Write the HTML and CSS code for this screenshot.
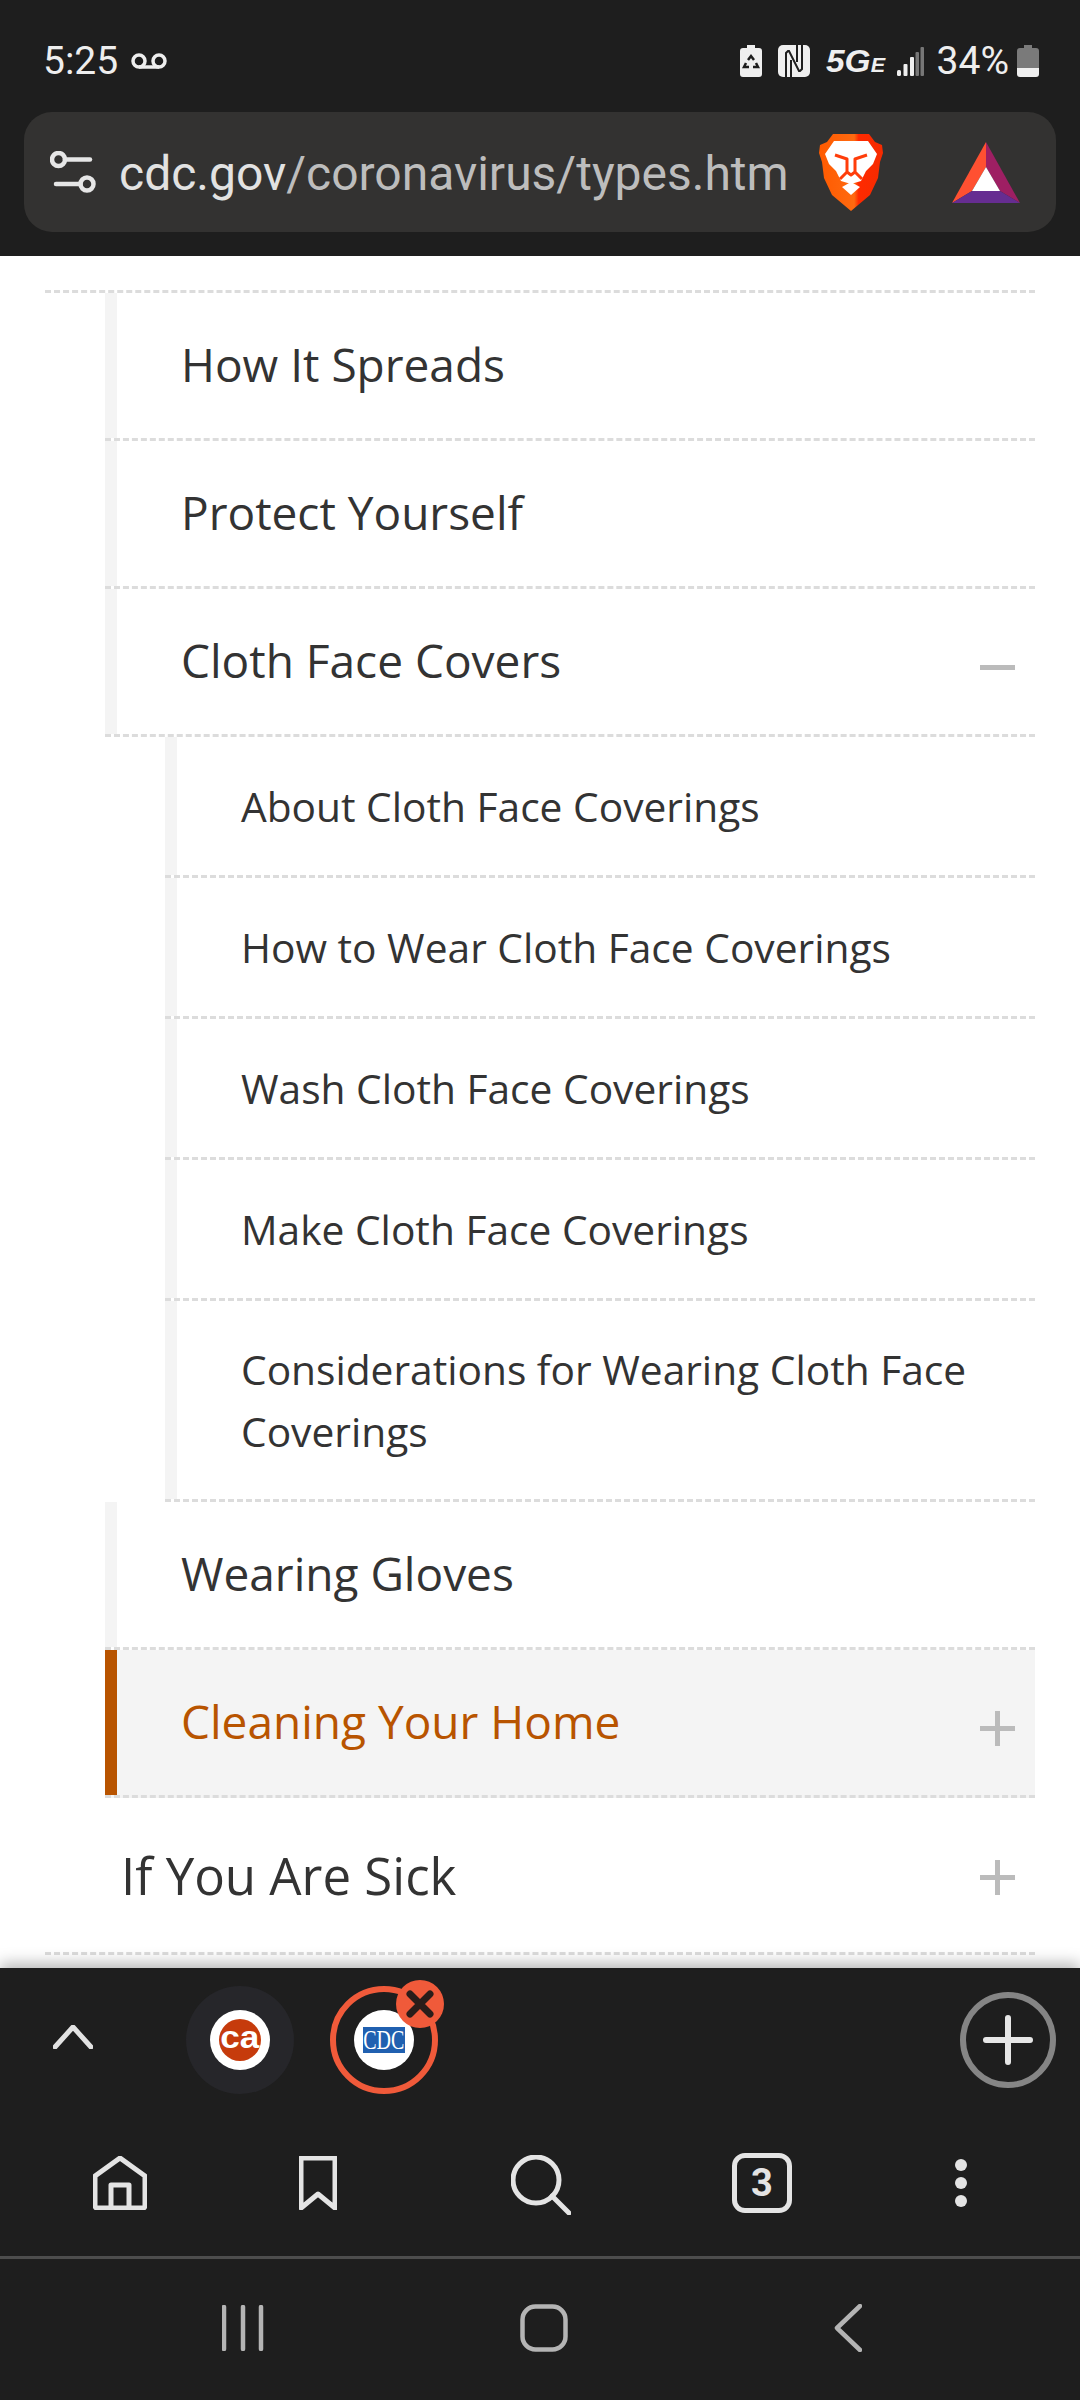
FILE: index.html
```html
<!DOCTYPE html>
<html lang="en">
<head>
<meta charset="utf-8">
<title>Cleaning Your Home</title>
<link rel="stylesheet" href="styles.css">
</head>
<body>
<div class="screen">
  <header class="top">
    <div class="status">
      <div class="status-left">
        <span class="clock">5:25</span>
        <svg class="vm" viewBox="0 0 36 16"><circle cx="8" cy="8" r="6" /><circle cx="28" cy="8" r="6" /><path d="M8 14H28" /></svg>
      </div>
      <div class="status-right">
        <svg class="ic-saver" viewBox="0 0 22 32"><path class="fill" d="M7 0h8v3h4a3 3 0 0 1 3 3v23a3 3 0 0 1-3 3H3a3 3 0 0 1-3-3V6a3 3 0 0 1 3-3h4z"/><path class="recycle" d="M8 15l3-4 3 4M16 18l2 4h-5M6 18l-2 4h5"/></svg>
        <svg class="ic-nfc" viewBox="0 0 32 32"><rect class="fill" width="32" height="32" rx="5"/><path class="nfc" d="M8 32V8l2-2h1l10 20h1l2-2V0M13 15v17M19 0v17"/></svg>
        <span class="net"><span class="net-in">5G<span class="net-e">E</span></span></span>
        <svg class="ic-signal" viewBox="0 0 27 29"><rect class="on" x="0" y="23" width="4" height="6" rx="1.5"/><rect class="on" x="6.5" y="17" width="4" height="12" rx="1"/><rect class="on" x="13" y="10" width="4" height="19" rx="1"/><rect class="off" x="18.5" y="5" width="3.5" height="24" rx="1"/><rect class="off" x="23.5" y="0" width="3.5" height="29" rx="1"/></svg>
        <span class="pct">34%</span>
        <svg class="ic-batt" viewBox="0 0 22 32"><path class="empty" d="M7 0h8v3h4a3 3 0 0 1 3 3v17H0V6a3 3 0 0 1 3-3h4z"/><path class="fill" d="M0 23h22v6a3 3 0 0 1-3 3H3a3 3 0 0 1-3-3z"/></svg>
      </div>
    </div>
    <div class="urlbar">
      <svg class="ic-sliders" viewBox="0 0 46 42"><circle cx="8.5" cy="8.5" r="6.5"/><path d="M15 8.5H40"/><circle cx="37" cy="33" r="6.5"/><path d="M6 33H30.500"/></svg>
      <div class="url"><span class="url-host">cdc.gov</span>/coronavirus/types.htm</div>
      <svg class="ic-brave" viewBox="0 0 64 77">
        <defs><linearGradient id="bg" x1="0" x2="1" y1="0" y2="0"><stop offset="0" stop-color="#ff5a00"/><stop offset=".55" stop-color="#ff6a10"/><stop offset=".62" stop-color="#ff2a00"/><stop offset="1" stop-color="#f52b00"/></linearGradient></defs>
        <path fill="url(#bg)" d="M14 0H50L56 8 63 11 64 19 61 28 59 44 51 61 32 77 13 61 5 44 3 28 0 19 1 11 8 8z"/>
        <path fill="#fff" d="M15 7H49L58 20 54 30 47 37 42 47 32 50 22 47 17 37 10 30 6 20z"/>
        <path class="lion" d="M16 21 28 25 28 38 32 41 36 38 36 25 48 21M28 38 21 45M36 38 43 45"/>
        <path fill="#fff" d="M23 53 32 48 41 53 32 61z"/>
      </svg>
      <svg class="ic-bat" viewBox="0 0 68 61">
        <path fill="#ff5031" d="M34 0V25L20 49 0 61z"/>
        <path fill="#9e1f63" d="M34 0 68 61 48 49 34 25z"/>
        <path fill="#662d91" d="M0 61 20 49H48L68 61z"/>
        <path fill="#fff" d="M34 25 48 49H20z"/>
      </svg>
    </div>
  </header>

  <main class="page">
    <ul class="nav">
      <li>
        <ul class="sub">
          <li class="row row-2"><a>How It Spreads</a></li>
          <li class="row row-2"><a>Protect Yourself</a></li>
          <li class="row row-2"><a>Cloth Face Covers</a><svg class="toggle" viewBox="0 0 35 35"><path d="M0 17.500H35"/></svg></li>
          <li>
            <ul class="subsub">
              <li class="row row-3"><a>About Cloth Face Coverings</a></li>
              <li class="row row-3"><a>How to Wear Cloth Face Coverings</a></li>
              <li class="row row-3"><a>Wash Cloth Face Coverings</a></li>
              <li class="row row-3"><a>Make Cloth Face Coverings</a></li>
              <li class="row row-3 row-wrap"><a>Considerations for Wearing Cloth Face Coverings</a></li>
            </ul>
          </li>
          <li class="row row-2"><a>Wearing Gloves</a></li>
          <li class="row row-2 active"><a>Cleaning Your Home</a><svg class="toggle" viewBox="0 0 35 35"><path d="M0 17.500H35M17.500 0V35"/></svg></li>
        </ul>
      </li>
      <li class="row row-1"><a>If You Are Sick</a><svg class="toggle" viewBox="0 0 35 35"><path d="M0 17.500H35M17.500 0V35"/></svg></li>
    </ul>
  </main>

  <footer class="bottom">
    <div class="tabstrip">
      <svg class="ic-chev" viewBox="0 0 40 24"><path d="M2 22 20 2 38 22"/></svg>
      <div class="tab tab-ca">
        <div class="fav"><span class="ca-badge"><span class="ca-text">ca</span></span></div>
      </div>
      <div class="tab tab-cdc">
        <div class="fav"><span class="cdc-badge"><span class="cdc-text">CDC</span></span></div>
        <svg class="close" viewBox="0 0 48 48"><circle cx="24" cy="24" r="24"/><path d="M14 14 34 34M34 14 14 34"/></svg>
      </div>
      <svg class="ic-add" viewBox="0 0 96 96"><circle cx="48" cy="48" r="45"/><path d="M26 48H70M48 26V70"/></svg>
    </div>
    <nav class="tools">
      <svg class="ic-home" viewBox="0 0 54 54"><path d="M2 20 27 2 52 20V50a2 2 0 0 1-2 2H4a2 2 0 0 1-2-2z"/><path d="M18 52V29H36V52"/></svg>
      <svg class="ic-book" viewBox="0 0 38 54"><path d="M2 2H36V52L19 38 2 52z"/></svg>
      <svg class="ic-search" viewBox="0 0 60 60"><circle cx="25" cy="25" r="23"/><path d="M41 41 58 58"/></svg>
      <div class="tabs-count">3</div>
      <div class="dots"><i></i><i></i><i></i></div>
    </nav>
    <div class="sysnav">
      <svg class="ic-recents" viewBox="0 0 42 46"><path d="M2 2V44M21 2V44M39 2V44"/></svg>
      <svg class="ic-square" viewBox="0 0 48 48"><rect x="2.500" y="2.500" width="43" height="43" rx="13"/></svg>
      <svg class="ic-back" viewBox="0 0 28 48"><path d="M26 2 3 24 26 46"/></svg>
    </div>
  </footer>
</div>
</body>
</html>
```
FILE: styles.css
```css
* { box-sizing: border-box; }
html, body { margin: 0; padding: 0; }
body { width: 1080px; height: 2400px; overflow: hidden; background: #fff; font-family: "Open Sans", sans-serif; }
ul { list-style: none; margin: 0; padding: 0; }
.screen { width: 1080px; height: 2400px; display: flex; flex-direction: column; }

/* top */
.top { height: 256px; background: #1e1e1e; padding: 0 24px; flex: none; }
.status { height: 112px; display: flex; justify-content: space-between; padding: 41px 17px 0 19px; align-items: flex-start; font-family: Roboto, sans-serif; color: #eee; }
.status-left { display: flex; align-items: center; height: 40px; }
.status-right { display: flex; align-items: center; height: 40px; }
.clock, .pct { font-size: 39px; line-height: 40px; }
.vm { width: 36px; height: 16px; margin-left: 13px; fill: none; stroke: #eee; stroke-width: 3.500; }
.fill { fill: #efefef; }
.ic-saver { width: 22px; height: 32px; }
.recycle { fill: none; stroke: #1e1e1e; stroke-width: 2.500; }
.ic-nfc { width: 32px; height: 32px; margin-left: 16px; }
.nfc { fill: none; stroke: #1e1e1e; stroke-width: 2; }
.net { margin-left: 16px; font: italic bold 31px/32px "Liberation Sans", sans-serif; color: #efefef; width: 57px; white-space: nowrap; padding-top: 4px; }
.net-in { display: inline-block; transform: scaleX(1.08); transform-origin: left center; }
.net-e { font-size: 20px; }
.ic-signal { width: 27px; height: 29px; margin-left: 14px; }
.on { fill: #efefef; }
.off { fill: #777; }
.pct { margin-left: 13px; }
.ic-batt { width: 22px; height: 32px; margin-left: 8px; }
.empty { fill: #7a7a7a; }

.urlbar { height: 120px; background: #333231; border-radius: 28px; display: flex; align-items: center; padding-left: 26px; }
.ic-sliders { width: 46px; height: 42px; fill: none; stroke: #e6e6e6; stroke-width: 4.500; stroke-linecap: round; flex: none; }
.url { margin-left: 23px; margin-top: 3px; font: 48px/62px Roboto, sans-serif; color: #bdbdbd; white-space: nowrap; width: 700px; }
.url-host { color: #e2e2e2; }
.ic-brave { width: 64px; height: 77px; flex: none; }
.lion { fill: none; stroke: #ff3d0a; stroke-width: 3; stroke-linejoin: round; }
.ic-bat { width: 68px; height: 61px; margin-left: 69px; flex: none; }

/* page */
.page { flex: 1; min-height: 0; overflow: hidden; padding: 34px 45px 0 45px; color: #333; }
.nav { border-top: 3px dashed #dcdcdc; }
.sub { margin-left: 60px; }
.subsub { margin-left: 60px; }
.row { display: flex; align-items: center; justify-content: space-between; border-bottom: 3px dashed #dcdcdc; }
.row a { display: block; }
.row-1 { height: 157px; padding: 0 20px 0 76px; font-size: 51px; line-height: 66px; }
.row-2 { height: 148px; padding: 0 20px 0 76px; font-size: 46px; line-height: 60px; box-shadow: inset 12px 0 0 #f4f4f4; }
.row-2 a { margin-bottom: 4px; }
.row-3 { height: 141px; padding: 0 20px 0 76px; font-size: 40.700px; line-height: 62px; box-shadow: inset 12px 0 0 #f4f4f4; }
.row-3 a { margin-bottom: 1px; }
.row-wrap { height: 201px; }
.active { color: #b85400; background: #f4f4f4; box-shadow: inset 12px 0 0 #b85400; }
.toggle { width: 35px; height: 35px; flex: none; fill: none; stroke: #bbb; stroke-width: 5; margin-top: 11px; }
.row-1 .toggle { margin-top: 5px; }

/* bottom */
.bottom { height: 432px; background: #1e1e1e; flex: none; position: relative; box-shadow: 0 -5px 14px rgba(0,0,0,.28); }
.tabstrip { height: 144px; display: flex; align-items: center; padding: 0 24px 0 53px; }
.ic-chev { width: 40px; height: 24px; fill: none; stroke: #e2e2e2; stroke-width: 5; stroke-linecap: round; stroke-linejoin: round; margin-top: -7px; flex: none; }
.tab { width: 108px; height: 108px; border-radius: 50%; display: flex; align-items: center; justify-content: center; position: relative; flex: none; }
.tab-ca { margin-left: 93px; background: #26262a; }
.tab-cdc { margin-left: 36px; border: 6px solid #f05a3a; }
.fav { width: 60px; height: 60px; border-radius: 50%; background: #fff; display: flex; align-items: center; justify-content: center; }
.ca-badge { width: 42px; height: 42px; border-radius: 50%; background: #c63b0c; color: #fff; font: bold 32px/36px "Liberation Sans", sans-serif; text-align: center; }
.ca-text { display: inline-block; transform: scaleX(1.1); }
.cdc-badge { width: 42px; height: 26px; background: #2060b0; color: #fff; font: 27px/26px "Liberation Serif", serif; display: flex; justify-content: center; }
.cdc-text { display: block; flex: none; transform: scaleX(.74); }
.close { position: absolute; right: -12px; top: -12px; width: 48px; height: 48px; }
.close circle { fill: #f05a3a; }
.close path { fill: none; stroke: #2a1d1a; stroke-width: 7; stroke-linecap: round; }
.ic-add { width: 96px; height: 96px; margin-left: auto; fill: none; flex: none; }
.ic-add circle { stroke: #858585; stroke-width: 6; }
.ic-add path { stroke: #e6e6e6; stroke-width: 6; stroke-linecap: round; }

.tools { height: 147px; display: flex; align-items: flex-start; padding: 43px 0 0 93px; border-bottom: 3px solid #4d4d4d; }
.tools svg { fill: none; stroke: #e4e4e4; stroke-width: 5; stroke-linejoin: round; stroke-linecap: round; flex: none; }
.ic-home { width: 54px; height: 54px; margin-top: 1px; }
.ic-book { width: 38px; height: 54px; margin: 1px 0 0 152px; }
.ic-search { width: 60px; height: 60px; margin-left: 174px; }
.tabs-count { width: 60px; height: 60px; margin-left: 161px; margin-top: -2px; border: 5px solid #e4e4e4; border-radius: 13px; display: flex; align-items: center; justify-content: center; color: #e4e4e4; font: bold 38px/1 "Liberation Sans Narrow", Roboto, sans-serif; flex: none; }
.dots { display: flex; flex-direction: column; gap: 6px; margin-left: 163px; margin-top: 4px; flex: none; }
.dots i { display: block; width: 12px; height: 12px; border-radius: 50%; background: #e4e4e4; }

.sysnav { display: flex; align-items: center; padding: 45px 0 0 222px; }
.sysnav svg { fill: none; stroke: #b4b4b4; stroke-width: 4.500; stroke-linecap: round; stroke-linejoin: round; flex: none; }
.ic-recents { width: 42px; height: 46px; }
.ic-square { width: 48px; height: 48px; margin-left: 256px; }
.ic-back { width: 28px; height: 48px; margin-left: 266px; }
```
